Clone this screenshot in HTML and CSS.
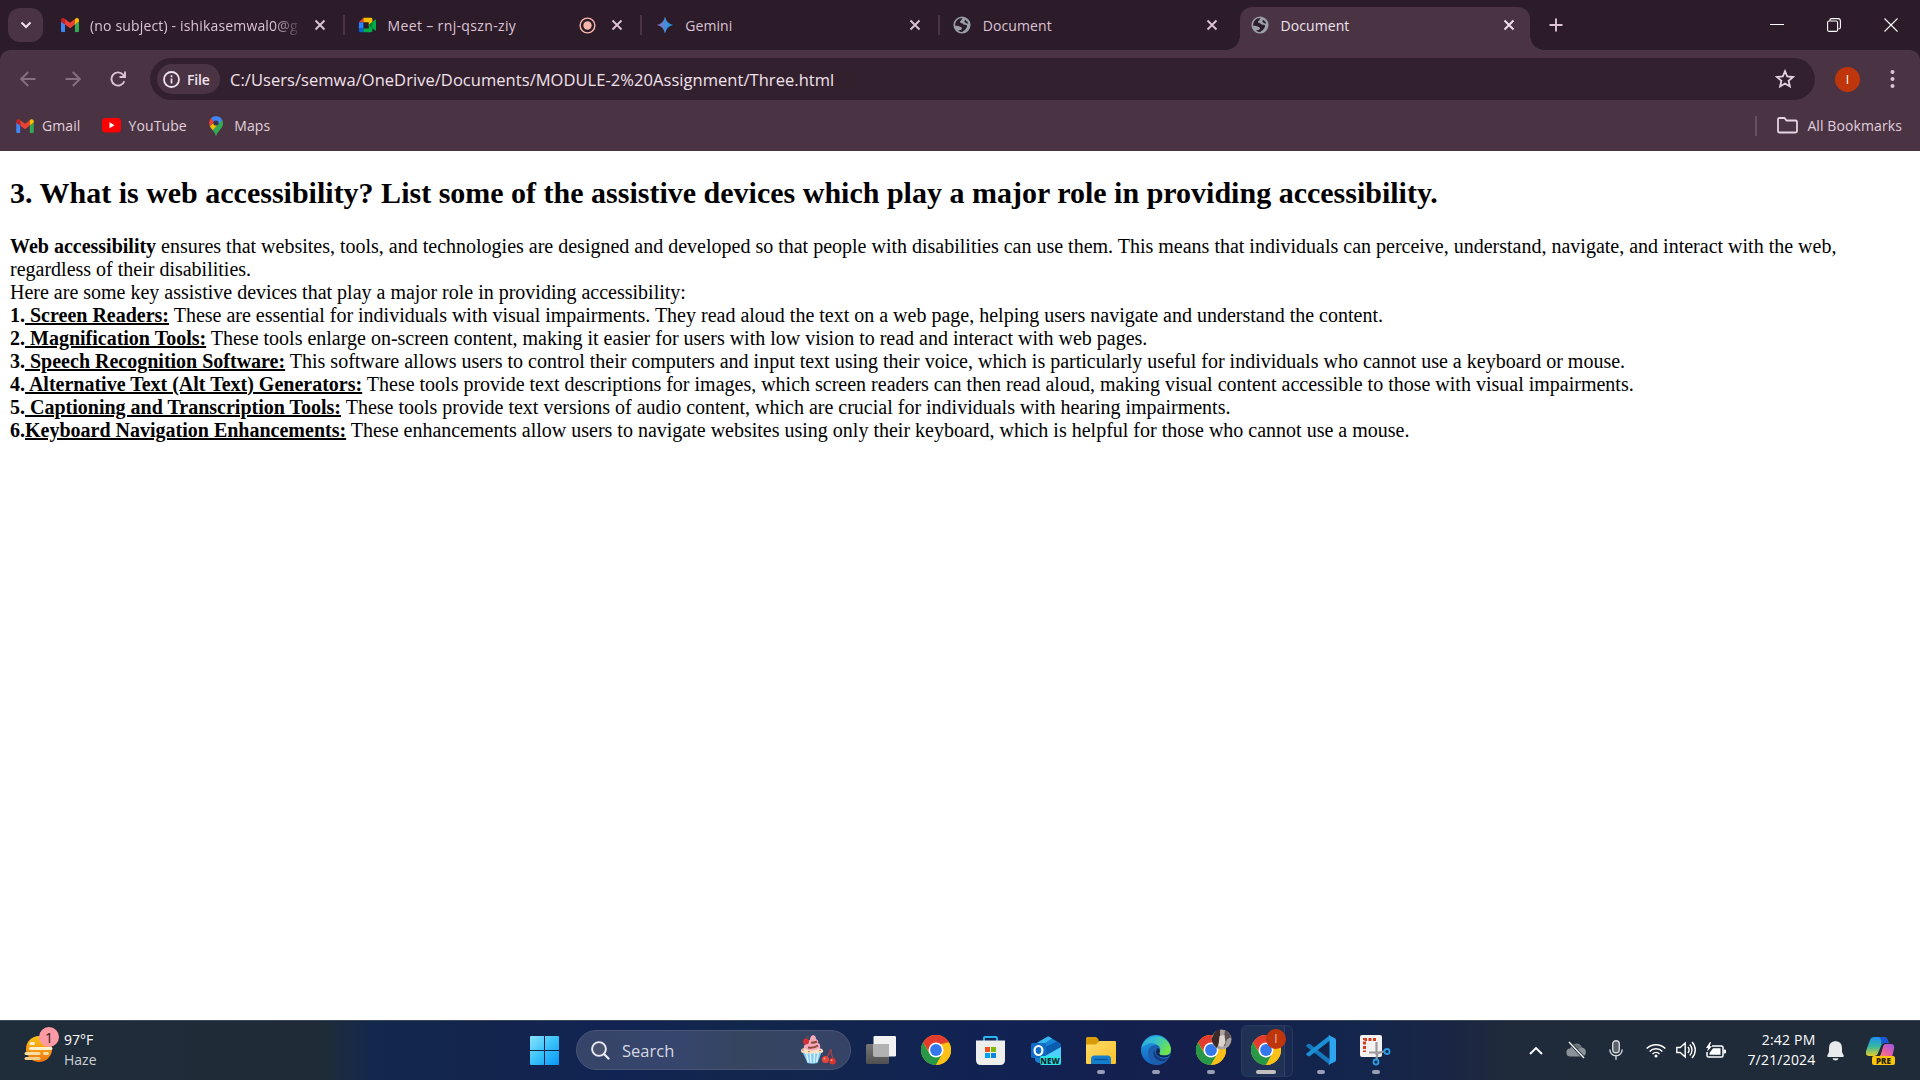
FILE: index.html
```html
<!DOCTYPE html>
<html lang="en">
<head>
<meta charset="utf-8">
<title>Document</title>
<link rel="stylesheet" href="styles.css">
</head>
<body>
<svg class="defs" width="0" height="0" aria-hidden="true">
  <defs>
    <symbol id="gmail" viewBox="0 0 20 16">
      <path fill="#4285f4" d="M0 4l4.500 3.300V16H1.400A1.400 1.400 0 0 1 0 14.600z"/>
      <path fill="#34a853" d="M20 4l-4.500 3.300V16h3.100a1.400 1.400 0 0 0 1.400-1.400z"/>
      <path fill="#ea4335" d="M4.500 1.300L10 5.500l5.500-4.200v6.200L10 11.600 4.500 7.500z"/>
      <path fill="#c5221f" d="M0 4V2.500C0 .4 2.200-.5 3.700.7l.8.6v6.200z"/>
      <path fill="#fbbc04" d="M20 4V2.500C20 .4 17.800-.5 16.300.7l-.8.6v6.200z"/>
    </symbol>
    <symbol id="globe" viewBox="0 0 20 20">
      <circle cx="10" cy="10" r="9.500" fill="#9aa0a6"/>
      <path class="globe-land" d="M11 2.300C9.500 3 10 4.600 8.600 5.200c-1 .5-1.200 1.600-.4 2.300.8.600 2.300.3 2.800 1.200.5 1 1.300 1.200 2.500 1 1.600-.2 2.500.8 2 2.200-.6 1.500-1.300 2.600-2.400 3.600-.9.800-2.100 1.100-2.600 2.200-2 .1-3.800-.7-5-2 1.900.2 3.700 0 4.300-1.200.4-1-.2-1.900-1.200-2.300-1.900-.6-4-1.400-6.200-1.200C2 5.600 6 2 11 2.300z"/>
      <path class="globe-land" d="M13.300 4.300l2.500 1.700 1.200 2.600-2.300-.6-2.100-1.700z"/>
    </symbol>
    <symbol id="x" viewBox="0 0 12 12"><path d="M1.500 1.500l9 9M10.500 1.500l-9 9" fill="none" stroke="currentColor" stroke-width="1.900"/></symbol>
    <symbol id="chrome" viewBox="0 0 30 30">
      <circle cx="15" cy="15" r="15" fill="#fbc116"/>
      <path fill="#e33b2e" d="M2 7.500A15 15 0 0 1 28 7.500L15 8.500 8.700 18z"/>
      <path fill="#279847" d="M2 7.500A15 15 0 0 0 15 30l6.300-11-6.300 3.300L8.600 18.700z"/>
      <path fill="#fbc116" d="M28 7.500A15 15 0 0 1 15 30l6.300-11.200L20 8z"/>
      <path fill="#e33b2e" d="M14 7.500h14L20 9z"/>
      <circle cx="15" cy="15" r="7.500" fill="#fff"/>
      <circle cx="15" cy="15" r="5.900" fill="#3478ec"/>
    </symbol>
    <linearGradient id="gem" x1="0" x2="1"><stop offset="0" stop-color="#9a6bc9"/><stop offset=".5" stop-color="#4a8bd6"/><stop offset="1" stop-color="#18a0e0"/></linearGradient>
    <linearGradient id="win" x1="0" y1="0" x2="1" y2="1"><stop offset="0" stop-color="#8be2fb"/><stop offset=".5" stop-color="#38c2fa"/><stop offset="1" stop-color="#0996f4"/></linearGradient>
    <linearGradient id="sun" x1="0" y1="0" x2="0" y2="1"><stop offset="0" stop-color="#fbc318"/><stop offset="1" stop-color="#ef7411"/></linearGradient>
    <linearGradient id="fold" x1="0" y1="0" x2="1" y2="1"><stop offset="0" stop-color="#ffdc68"/><stop offset="1" stop-color="#fcc02a"/></linearGradient>
    <linearGradient id="edgeTop" x1="0" y1="0" x2="1" y2=".4"><stop offset="0" stop-color="#2aa9e6"/><stop offset=".5" stop-color="#35c3cd"/><stop offset="1" stop-color="#6fe34c"/></linearGradient>
    <linearGradient id="edgeLow" x1="0" y1="0" x2="0" y2="1"><stop offset="0" stop-color="#229fe0"/><stop offset="1" stop-color="#1263c2"/></linearGradient>
    <linearGradient id="copA" x1="0" y1="0" x2="0" y2="1"><stop offset="0" stop-color="#1f8ff0"/><stop offset=".5" stop-color="#35b7a0"/><stop offset="1" stop-color="#e8ce28"/></linearGradient>
    <linearGradient id="copB" x1="1" y1="0" x2="0" y2="1"><stop offset="0" stop-color="#9a55e8"/><stop offset=".6" stop-color="#f0629b"/><stop offset="1" stop-color="#fb9a55"/></linearGradient>
    <linearGradient id="tvB" x1="0" y1="0" x2="0" y2="1"><stop offset="0" stop-color="#777"/><stop offset="1" stop-color="#505050"/></linearGradient>
  </defs>
</svg>

<header class="browser">
  <div class="tabstrip">
    <button class="tab-search"><svg width="12" height="8" viewBox="0 0 12 8"><path d="M1.500 1.500L6 6l4.500-4.500" fill="none" stroke="#f0e2ec" stroke-width="2"/></svg></button>
    <div class="tab">
      <svg class="tab-icon" viewBox="0 0 20 20"><use href="#gmail" y="2" width="20" height="16"/></svg>
      <span class="tab-title fade">(no subject) - ishikasemwal0@g</span>
      <svg class="tab-close"><use href="#x"/></svg>
    </div>
    <div class="tab">
      <svg class="tab-icon" viewBox="0 0 20 20"><path fill="#ea4335" d="M1 7l5-5v5z"/><path fill="#fbbc04" d="M6 2h8.500Q16 2 16 3.500V9l-4 2V7H6z"/><path fill="#2684fc" d="M1 7h5v7H1z"/><path fill="#0066da" d="M1 14h5v4H2.500Q1 18 1 16.500z"/><path fill="#00ac47" d="M6 14h6v-4l7-6q1-.5 1 .5v11q0 1-1 .5l-3-2.500v3q0 1.500-1.500 1.500H6z"/><path fill="#00832d" d="M12 10l4-3.500v7z"/></svg>
      <span class="tab-title t-meet">Meet – rnj-qszn-ziy</span>
      <svg class="record" viewBox="0 0 18 18"><circle cx="9" cy="9" r="7.800" fill="none" stroke="#f9b6ab" stroke-width="1.500"/><circle cx="9" cy="9" r="4.400" fill="#f9b6ab"/></svg>
      <svg class="tab-close"><use href="#x"/></svg>
    </div>
    <div class="tab">
      <svg class="tab-icon" viewBox="0 0 20 20"><path fill="url(#gem)" d="M10 .5q1.600 7.900 9 9.500-7.400 1.600-9 9.500Q8.400 11.600 1 10 8.400 8.400 10 .5z"/></svg>
      <span class="tab-title">Gemini</span>
      <svg class="tab-close"><use href="#x"/></svg>
    </div>
    <div class="tab last">
      <svg class="tab-icon"><use href="#globe"/></svg>
      <span class="tab-title">Document</span>
      <svg class="tab-close"><use href="#x"/></svg>
    </div>
    <div class="tab active">
      <svg class="tab-icon"><use href="#globe"/></svg>
      <span class="tab-title">Document</span>
      <svg class="tab-close"><use href="#x"/></svg>
    </div>
    <button class="new-tab"><svg width="14" height="14" viewBox="0 0 14 14"><path d="M7 .5v13M.5 7h13" stroke="#dcc3d6" stroke-width="1.900"/></svg></button>
    <div class="window-controls">
      <svg width="14" height="14" viewBox="0 0 14 14"><path d="M0 6.500h14" stroke="#fff"/></svg>
      <svg width="14" height="14" viewBox="0 0 14 14" fill="none" stroke="#fff" stroke-width="1.100"><rect x=".6" y="3" width="10" height="10.400" rx="1.500"/><path d="M3 2.800V2Q3 .6 4.500.6H11q2.400 0 2.400 2.400v6.500q0 1.500-2 1.500"/></svg>
      <svg width="14" height="14" viewBox="0 0 14 14"><path d="M.5.5l13 13M13.500.5l-13 13" stroke="#fff" stroke-width="1.100"/></svg>
    </div>
  </div>

  <div class="toolbar-area">
    <div class="toolbar">
      <svg class="nav dim" viewBox="0 0 16 16"><path d="M15.500 8H1.500M8.200 1L1.200 8l7 7"/></svg>
      <svg class="nav dim" viewBox="0 0 16 16"><path d="M.5 8h14M7.800 1l7 7-7 7"/></svg>
      <svg class="nav" viewBox="0 0 16 16"><path d="M14.300 10.200A6.600 6.600 0 1 1 13 3.600L15 6M15 .5V6H9.500"/></svg>
      <div class="omnibox">
        <div class="chip">
          <svg width="17" height="17" viewBox="0 0 17 17"><circle cx="8.500" cy="8.500" r="7.500" fill="none" stroke="#f0e2ec" stroke-width="1.800"/><path d="M8.500 7.500v5M8.500 4.300v1.900" stroke="#f0e2ec" stroke-width="1.700"/></svg>
          <span class="chip-text">File</span>
        </div>
        <span class="url">C:/Users/semwa/OneDrive/Documents/MODULE-2%20Assignment/Three.html</span>
        <svg class="star" width="20" height="20" viewBox="0 0 20 20"><path d="M10 2.200l2.200 5.300 5.800.5-4.400 3.800 1.300 5.600L10 14.500l-4.900 2.900 1.300-5.600L2 8l5.800-.5z" fill="none" stroke="#e6d3e0" stroke-width="1.800"/></svg>
      </div>
      <div class="avatar">I</div>
      <svg class="kebab" width="5" height="20" viewBox="0 0 5 20" fill="#dcc3d6"><circle cx="2.500" cy="3" r="2"/><circle cx="2.500" cy="10" r="2"/><circle cx="2.500" cy="17" r="2"/></svg>
    </div>
    <div class="bookmarks">
      <svg class="bm-icon"><use href="#gmail"/></svg><span class="bm">Gmail</span>
      <svg class="bm-yt" viewBox="0 0 19 15"><rect width="19" height="14.500" rx="3.500" fill="#f00"/><path d="M7.500 4.200v6l5-3z" fill="#fff"/></svg><span class="bm">YouTube</span>
      <svg class="bm-map" viewBox="0 0 14 20"><path fill="#34a853" d="M.8 10C2.500 14 6 15 7 20c1-5 7-7.500 7-13L11.500 2z"/><path fill="#fbbc04" d="M.8 10q1.500 2.500 3 4.200L12 5 7 5z"/><path fill="#34a853" d="M3.800 14.200L13.300 4Q14 5.500 14 7c0 5.500-6 8-7 13-.5-2.800-1.700-4.200-3.200-5.800z"/><path fill="#4285f4" d="M2 2.300A7 7 0 0 1 13.300 4L8.500 9 4 5z"/><path fill="#ea4335" d="M2 2.300A7 7 0 0 0 .8 10L5 6z"/><circle cx="7" cy="7" r="2.600" fill="#35364f"/></svg><span class="bm">Maps</span>
      <span class="bm-divider"></span>
      <svg class="bm-folder" viewBox="0 0 21 17"><path d="M1 14V2.500Q1 1 2.500 1h5l2 2.500h9Q20 3.500 20 5v9q0 1.500-1.500 1.500h-16Q1 15.500 1 14z" fill="none" stroke="#e6d3e0" stroke-width="1.800"/></svg><span class="bm">All Bookmarks</span>
    </div>
  </div>
</header>

<main class="page">
  <h2>3. What is web accessibility? List some of the assistive devices which play a major role in providing accessibility.</h2>
  <p><b>Web accessibility</b> ensures that websites, tools, and technologies are designed and developed so that people with disabilities can use them. This means that individuals can perceive, understand, navigate, and interact with the web, regardless of their disabilities.<br>
  Here are some key assistive devices that play a major role in providing accessibility:<br>
  <b>1.<u> Screen Readers:</u></b> These are essential for individuals with visual impairments. They read aloud the text on a web page, helping users navigate and understand the content.<br>
  <b>2.<u> Magnification Tools:</u></b> These tools enlarge on-screen content, making it easier for users with low vision to read and interact with web pages.<br>
  <b>3.<u> Speech Recognition Software:</u></b> This software allows users to control their computers and input text using their voice, which is particularly useful for individuals who cannot use a keyboard or mouse.<br>
  <b>4.<u> Alternative Text (Alt Text) Generators:</u></b> These tools provide text descriptions for images, which screen readers can then read aloud, making visual content accessible to those with visual impairments.<br>
  <b>5.<u> Captioning and Transcription Tools:</u></b> These tools provide text versions of audio content, which are crucial for individuals with hearing impairments.<br>
  <b>6.<u>Keyboard Navigation Enhancements:</u></b> These enhancements allow users to navigate websites using only their keyboard, which is helpful for those who cannot use a mouse.</p>
</main>

<footer class="taskbar">
  <div class="weather">
    <div class="weather-icon">
      <svg width="30" height="30" viewBox="0 0 30 30"><circle cx="15" cy="15" r="13" fill="url(#sun)"/><g stroke="#fdf0cf" stroke-width="3" stroke-linecap="round"><path d="M7 9.500h2.500M6.500 14.500H27"/><path d="M2 19.500h13M20.500 19.500h3" stroke="#f8dfa5"/><path d="M2 24.500h13" stroke="#f3cf8d"/></g></svg>
      <span class="badge">1</span>
    </div>
    <div class="weather-text"><span class="temp">97°F</span><span class="cond">Haze</span></div>
  </div>

  <div class="apps">
    <div class="start"><svg width="29" height="29" viewBox="0 0 29 29"><path fill="url(#win)" d="M1 0h13v14H0V1Q0 0 1 0zM15 0h13q1 0 1 1v13H15zM0 15h14v14H1q-1 0-1-1zM15 15h14v13q0 1-1 1H15z"/></svg></div>
    <div class="search">
      <svg width="19" height="19" viewBox="0 0 19 19"><circle cx="8" cy="8" r="6.900" fill="#49526f" stroke="#e8ebf2" stroke-width="1.900"/><path d="M13 13l4.500 4.500" stroke="#e8ebf2" stroke-width="2.300" stroke-linecap="round"/></svg>
      <span class="search-text">Search</span>
      <svg class="cupcake" width="36" height="30" viewBox="0 0 36 30"><path fill="#7ec8f4" d="M2 16h20l-4.500 12q-5.500 1.500-10 0z"/><path d="M6 17l2.500 10.500M10 17l1 11M14.500 17L14 28M18.500 17L16.500 27" stroke="#d6f0ff" stroke-width="1.600"/><path fill="#fae3c5" d="M1 16q0-3 4-3h14q5 1 4 4-2 2-4 0-2 3-5 1-3 2-5 0-3 2-5-.5-3 1-3-1.500z"/><path fill="#f6a9bd" d="M4 13q-1-3 3-4.500Q6 6 10 5q0-4 3-5 3 .5 3 4 3 1 2 4 3 1 2 5-4 2.500-8 2.500T4 13z"/><path d="M8 12.500q6 1 10-2M11 7.500q3 .5 6-1" fill="none" stroke="#8d4a35" stroke-width="2"/><circle cx="6" cy="6.500" r="3" fill="#d72f36"/><path d="M6 4Q6 1.500 8.500 1" fill="none" stroke="#864c39"/><g fill="#d7544a"><circle cx="3" cy="15" r=".8"/><circle cx="9" cy="16.500" r=".8"/><circle cx="20" cy="15.500" r=".8"/></g><path d="M26 23q3-3 5-9 0 6 2 10" fill="none" stroke="#a33f45" stroke-width="1.300"/><circle cx="25.500" cy="24.500" r="3.600" fill="#e34738"/><circle cx="32.500" cy="26.200" r="3.200" fill="#d93630"/><circle cx="24.500" cy="23.500" r="1" fill="#ff9b84"/><circle cx="31.500" cy="25.200" r="1" fill="#ff9b84"/></svg>
    </div>
    <div class="app first"><svg width="30" height="28" viewBox="0 0 30 28"><rect y="8" width="23" height="20" rx="1.500" fill="url(#tvB)"/><rect x="7.500" width="22.500" height="20.500" rx="1.200" fill="#f2f2f2"/><path d="M7.500 8H23v12.500H8.500q-1 0-1-1z" fill="#b2b2b2"/></svg></div>
    <div class="app"><svg width="30" height="30"><use href="#chrome"/></svg></div>
    <div class="app"><svg width="29" height="29" viewBox="0 0 29 29"><path d="M8 5V2Q8 1 9 1h11q1 0 1 1v3" fill="none" stroke="#2bb4ee" stroke-width="1.900"/><path d="M0 4.500h29V24q0 5-5 5H5q-5 0-5-5z" fill="#eeeeed"/><path fill="#f25022" d="M9 11h5v5H9z"/><path fill="#7fba00" d="M15 11h5v5h-5z"/><path fill="#00a4ef" d="M9 17h5v5H9z"/><path fill="#0a84e0" d="M15 17h5v5h-5z"/></svg></div>
    <div class="app"><div class="outlook"><svg width="30" height="29" viewBox="0 0 30 29"><path fill="#1681d6" d="M4 8L16 1q1-.8 2.500 0L30 8v19H8q-4-1-4-4z"/><path fill="#36b7ee" d="M4 8L16 1q1-.8 2.500 0L21 2.500 8 11z"/><path fill="#0a5cae" d="M12 12L26 5.500l4 2.500v4l-14 8z"/><path fill="#4ed0fa" d="M14 20l16-9v12z"/><rect y="7" width="15" height="15" rx="1.500" fill="#0f6cc4"/><ellipse cx="7.500" cy="14.500" rx="3.900" ry="4.500" fill="none" stroke="#fff" stroke-width="2.200"/></svg><span class="new">NEW</span></div></div>
    <div class="app running"><svg width="30" height="27" viewBox="0 0 30 27"><path fill="#d99b0a" d="M0 1.500Q0 0 1.500 0H10l3 2.500h-1L13 4v5H0z"/><path fill="url(#fold)" d="M0 7.500h10L13.500 4H29q1 0 1 1v21q0 1-1 1H1q-1 0-1-1z"/><path fill="#1480cd" d="M5 27v-5q0-3.500 3.500-3.500h13Q25 18.500 25 22v5z"/><path d="M9 22.500h12" stroke="#0b559e" stroke-width="1.500" stroke-linecap="round"/></svg></div>
    <div class="app running"><svg width="30" height="30" viewBox="0 0 30 30"><circle cx="15" cy="15" r="15" fill="url(#edgeLow)"/><path fill="#1c5fae" d="M7 20Q6 11 14 10q4-.5 6 3-3-1.500-4.500 1Q13 18 17 21.500q5 3.500 11 .5-4 8-13 8-7-2-8-10z"/><path fill="#143b82" d="M13 14q-3 9 6 12 6 1 8.700-3.500Q23 25.500 17.500 22 13 19 13 14z"/><path fill="url(#edgeTop)" d="M.5 13A15 15 0 0 1 30 14q0 6.500-7 6.500-6 0-4.500-3Q21 13 16 9.500 8 5 .5 13z"/><path fill="#12244f" d="M16.500 13q-3 3.500-.5 7 4 4 11.500 1.500l2-2.500Q26 20.500 23 20.500q-5.500 0-4.500-3 1-2-.2-4z"/></svg></div>
    <div class="app running"><svg width="30" height="30"><use href="#chrome"/></svg>
      <svg class="profile" width="21" height="21" viewBox="0 0 21 21"><circle cx="10.500" cy="10.500" r="10" fill="#a8a2a0"/><path fill="#3d2828" d="M3.500 3.500q2.500-3 5.500-3v10L6 19Q1 15 .5 10z"/><path fill="#5b504e" d="M14 1.200q4 1.500 6 7l-4 2-2 7-2-2z"/><path fill="#ddd4d0" d="M8.500 7l5-1 1 8-3 4-4-1z"/></svg></div>
    <div class="app running current"><svg width="30" height="30"><use href="#chrome"/></svg><span class="profile initial">I</span></div>
    <div class="app running"><svg width="30" height="30" viewBox="0 0 30 30"><path fill="#1478bd" d="M0 10.500l2-1.600q1-.5 2 .2L24 24.500V30L1 12q-1-.7-1-1.500z"/><path fill="#1b8fd6" d="M0 19.500l2 1.600q1 .5 2-.2L24 5.500V0L1 18q-1 .7-1 1.500z"/><path fill="#2ca5ee" d="M22 0l6.500 3Q30 3.700 30 5v20q0 1.500-1.500 2L22 30q1.500-1 1.500-3V3Q23.500 1 22 0z"/></svg></div>
    <div class="app running"><svg width="31" height="31" viewBox="0 0 31 31"><rect width="22" height="22" rx="2" fill="#f3f2f1"/><path d="M16 4.500H4.500V17" fill="none" stroke="#d83b1e" stroke-width="3" stroke-dasharray="3 1.500"/><path d="M16.500 7v11.500L22 17M9 17.500h10l5-1M17.500 18l-1 6" fill="none" stroke="#9b9b9e" stroke-width="2.200"/><circle cx="27" cy="16.500" r="2.500" fill="none" stroke="#2a9ce0" stroke-width="1.900"/><circle cx="16" cy="27" r="2.500" fill="none" stroke="#2a9ce0" stroke-width="1.900"/></svg></div>
  </div>

  <div class="tray">
    <div class="slot"><svg width="14" height="9" viewBox="0 0 14 9"><path d="M1 8l6-6 6 6" fill="none" stroke="#fff" stroke-width="1.900"/></svg></div>
    <div class="slot"><svg width="21" height="18" viewBox="0 0 21 18"><path fill="#8b9298" d="M4.500 15.500a4 4 0 0 1-.2-8A6 6 0 0 1 15.800 6.500a4.600 4.600 0 0 1 .7 9z"/><path fill="#697179" d="M7 4a6 6 0 0 1 8.800 2.500Q13 7 11.500 9z"/><path d="M3 1l15 16" stroke="#1f2b38" stroke-width="3"/><path d="M3 1l15 16" stroke="#fff" stroke-width="1.300"/></svg></div>
    <div class="slot"><svg width="14" height="20" viewBox="0 0 14 20" fill="none" stroke="#d4d7da" stroke-width="1.400"><rect x="3.700" y=".8" width="6.600" height="12" rx="3.300" fill="#59626c"/><path d="M.8 9.500a6.200 6.200 0 0 0 12.400 0M7 15.800v4"/></svg></div>
    <div class="slot narrow gap"><svg width="20" height="15" viewBox="0 0 20 15" fill="none" stroke="#fff" stroke-width="1.500"><path d="M.7 5.600a13 13 0 0 1 18.600 0M3.600 8.500a9 9 0 0 1 12.800 0M6.500 11a5 5 0 0 1 7 0"/><circle cx="10" cy="13" r="1.500" fill="#fff" stroke="none"/></svg></div>
    <div class="slot narrow"><svg width="20" height="18" viewBox="0 0 20 18" fill="none" stroke="#fff" stroke-width="1.400"><path d="M.8 6.500h3.400l5-4.500v14l-5-4.500H.8zM11.800 6a4 4 0 0 1 0 6"/><path d="M13.800 3.500a8 8 0 0 1 0 11M16 1a11.500 11.500 0 0 1 0 16"/></svg></div>
    <div class="slot narrow"><svg width="20" height="16" viewBox="0 0 20 16"><path d="M6 4h9.500Q17 4 17 5.500v8q0 1.500-1.500 1.500h-13Q1 15 1 13.500V10" fill="none" stroke="#fff" stroke-width="1.500"/><path d="M7 6.200h7.500v6.600H3.500V11zM17.500 7.500h1.200q1.300 0 1.300 1v2q0 1-1.300 1h-1.200zM4 0L0 6h2L1.200 9.500 6 4.300H3.800L5 0z" fill="#fff"/></svg></div>
    <div class="clock"><span class="time">2:42 PM</span><span class="date">7/21/2024</span></div>
    <div class="bell"><svg width="17" height="20" viewBox="0 0 17 20"><path fill="#e8eaeb" d="M8.500 0Q2 .5 2 7v4L.3 14.500q-.4 1.300.9 1.500h14.600q1.300-.2.9-1.500L15 11V7Q15 .5 8.500 0zM5.500 17.200h6Q11 19.500 8.500 19.500t-3-2.300z"/></svg></div>
    <div class="copilot"><svg width="29" height="20" viewBox="0 0 29 20"><path fill="url(#copA)" d="M8 0h10q3 0 4 4l1 2h-5q-2 0-3 3l-3 7q-1 3-4 3H3q-4 0-3-5L4 3q1-3 4-3z"/><path fill="#1d57d8" d="M13 0h5q3 0 4 4l1 2h-5q-2 0-3 2 1-6-2-8z"/><path fill="url(#copB)" d="M19 7h6q4 0 3 5l-2 8H11q3 0 4-3l2-7q.5-2.500 2-3z"/></svg><span class="pre">PRE</span></div>
  </div>
</footer>
</body>
</html>
```
FILE: styles.css
```css
* { box-sizing: border-box; }
html, body { margin: 0; height: 100%; }
body {
  width: 1920px;
  height: 1080px;
  overflow: hidden;
  display: flex;
  flex-direction: column;
  background: #fff;
  font-family: "Open Sans", "Noto Sans", sans-serif;
}
svg { display: block; flex: none; }
span { white-space: nowrap; }
.defs { position: absolute; }
button { border: 0; padding: 0; background: none; display: flex; align-items: center; justify-content: center; }

/* browser frame */
.browser { flex: none; height: 151px; background: #2c1b29; }
.tabstrip { height: 50px; display: flex; align-items: flex-start; padding-left: 8px; }
.tab-search { width: 35px; height: 34px; margin-top: 8px; border-radius: 12px; background: #4a3444; }
.tab {
  position: relative;
  width: 297.600px;
  height: 34px;
  margin-top: 8px;
  padding: 0 12px 0 17.500px;
  display: flex;
  align-items: center;
  color: #dcc3d6;
}
.tab::after {
  content: "";
  position: absolute;
  right: -4px;
  top: 7px;
  width: 2px;
  height: 20px;
  background: #4a3444;
}
.tab.last::after, .tab.active::after { display: none; }
.tab-icon { width: 18px; height: 18px; }
.tab-title { flex: 1; margin-left: 11.500px; padding-top: 1px; font-size: 14px; line-height: 20px; letter-spacing: .1px; }
.fade { letter-spacing: .16px; -webkit-mask-image: linear-gradient(90deg, #000 82%, transparent 95%); mask-image: linear-gradient(90deg, #000 82%, transparent 95%); }
.t-meet { letter-spacing: .35px; }
.tab-close { width: 12px; height: 12px; margin-right: 3px; }
.record { width: 17px; height: 17px; margin-right: 15px; }
.globe-land { fill: #2c1b29; }
.active .globe-land { fill: #4a3444; }
.tab.active {
  width: 290px;
  height: 43px;
  margin: 7px 0 0 6.500px;
  padding: 0 11.500px 7px 11px;
  background: #4a3444;
  border-radius: 12px 12px 0 0;
  color: #f0e2ec;
}
.tab.active::before {
  content: "";
  position: absolute;
  left: -14px;
  right: -14px;
  bottom: 0;
  height: 14px;
  background:
    radial-gradient(circle at 0 0, transparent 13.500px, #4a3444 14px) left / 14px 14px no-repeat,
    radial-gradient(circle at 100% 0, transparent 13.500px, #4a3444 14px) right / 14px 14px no-repeat;
}
.new-tab { width: 34px; height: 34px; margin: 8px 0 0 9px; }
.window-controls { margin: 18px 22px 0 auto; display: flex; gap: 43px; }

.toolbar-area { height: 101px; background: #4a3444; border-radius: 10px 10px 0 0; position: relative; }
.toolbar { height: 58px; display: flex; align-items: center; padding: 0 25px 0 19.500px; }
.nav { width: 16px; height: 16px; margin-right: 29px; fill: none; stroke: #dcc3d6; stroke-width: 1.900; }
.dim { stroke: #85707f; }
.omnibox {
  width: 1665px;
  height: 42px;
  margin-left: -4.500px;
  padding: 0 20px 0 7px;
  display: flex;
  align-items: center;
  border-radius: 21px;
  background: #33202e;
}
.chip { width: 63px; height: 30px; border-radius: 15px; background: #4a3444; display: flex; align-items: center; padding-left: 6px; }
.chip-text { margin-left: 7px; font-size: 14px; font-weight: 600; letter-spacing: -.2px; color: #f0e2ec; }
.url { margin-left: 10px; font-size: 16.500px; letter-spacing: .05px; color: #f0e2ec; }
.star { margin-left: auto; }
.avatar { width: 25px; height: 25px; margin-left: 20px; border-radius: 50%; background: #bf360c; color: #fff; font-size: 12px; line-height: 25px; text-align: center; }
.kebab { margin-left: 30px; }
.bookmarks { height: 35px; display: flex; align-items: center; padding: 0 18px 0 16px; }
.bm { font-size: 14px; line-height: 20px; letter-spacing: .1px; color: #e0cfdb; }
.bm-icon { width: 18px; height: 14px; margin-right: 8px; }
.bm-yt { width: 19px; height: 15px; margin: 0 8px 0 21px; }
.bm-map { width: 14px; height: 20px; margin: 0 11px 0 22.500px; }
.bm-divider { width: 2px; height: 20px; margin: 0 20px 0 auto; background: #65505f; }
.bm-folder { width: 21px; height: 17px; margin-right: 9px; }

/* document */
.page { flex: 1; padding: 0 10px; font-family: "Liberation Serif", "Times New Roman", serif; font-size: 20px; line-height: 23px; color: #000; }
.page h2 { margin: 25px 0; font-size: 30px; line-height: 34px; }
.page p { margin: 0; }

/* taskbar */
.taskbar {
  flex: none;
  height: 60px;
  display: flex;
  border-top: 1px solid #3c4657;
  background: linear-gradient(90deg, #1f2c39 0, #1f2c38 325px, #13284d 370px, #13254c 470px, #112352 620px, #12274c 740px, #112253 1000px, #141f4c 1180px, #13264c 1360px, #1a2544 1450px, #1f2b3a 1510px, #1f2b38 100%);
  color: #fff;
}
.weather { width: 530px; padding: 6px 0 0 24px; display: flex; }
.weather-icon { position: relative; width: 31px; padding-top: 7px; }
.badge { position: absolute; left: 15px; top: 0; width: 20px; height: 20px; border-radius: 50%; background: #ff99a4; color: #1d1d1d; font-size: 14px; line-height: 21px; text-align: center; }
.weather-text { margin: 3px 0 0 9px; display: flex; flex-direction: column; font-size: 14px; line-height: 20px; }
.cond { color: #ccd0d4; }
.apps { display: flex; align-items: flex-start; }
.start { width: 46px; padding-top: 15px; }
.search {
  width: 275px;
  height: 40px;
  margin-top: 9px;
  padding: 0 14px;
  display: flex;
  align-items: center;
  border-radius: 20px;
  border: 1px solid #485576;
  background: linear-gradient(90deg, #364469, #36456c 40%, #35455f 60%, #364368);
}
.search-text { margin-left: 12px; font-size: 16.500px; color: #d5d9e3; }
.cupcake { margin-left: auto; }
.app { position: relative; width: 55px; height: 58px; display: flex; align-items: center; justify-content: center; }
.app.first { margin-left: 2px; }
.app.running::after { content: ""; position: absolute; left: 23.500px; top: 49px; width: 8px; height: 4px; border-radius: 2px; background: #969db4; }
.app.current::after { left: 17.500px; width: 20px; background: #c3c1bf; }
.app.current::before { content: ""; position: absolute; left: 3px; top: 4px; width: 50px; height: 50px; border: 1px solid #283a60; border-radius: 6px; background: linear-gradient(90deg, #203156 42px, #304064 42px, #304064 43px, #1a2952 43px); }
.app.current > svg { position: relative; }
.profile { position: absolute; left: 28px; top: 8px; }
.initial { width: 20px; height: 20px; border-radius: 50%; background: #bf360c; color: #e8b7a6; font-size: 12px; line-height: 20px; text-align: center; }
.outlook { position: relative; }
.new { position: absolute; left: 9px; bottom: 0; width: 21px; height: 9px; border-radius: 2px; background: #30e5e5; color: #0b2a33; font-size: 8px; font-weight: 800; line-height: 9px; text-align: center; }
.tray { margin-left: auto; padding-right: 25px; display: flex; }
.slot { width: 40px; height: 58px; display: flex; align-items: center; justify-content: center; }
.slot.narrow { width: 30px; }
.slot.gap { margin-left: 5px; }
.clock { width: 84.500px; padding-top: 9px; display: flex; flex-direction: column; align-items: flex-end; font-size: 14px; line-height: 20px; letter-spacing: .2px; }
.bell { width: 50.500px; padding: 20px 0 0 11px; }
.copilot { position: relative; width: 29px; padding-top: 16px; }
.pre { position: absolute; left: 6px; top: 35px; width: 23px; height: 9px; border-radius: 2px; background: #fdc40c; color: #2b2200; font-size: 8px; font-weight: 800; line-height: 9px; text-align: center; }
```
